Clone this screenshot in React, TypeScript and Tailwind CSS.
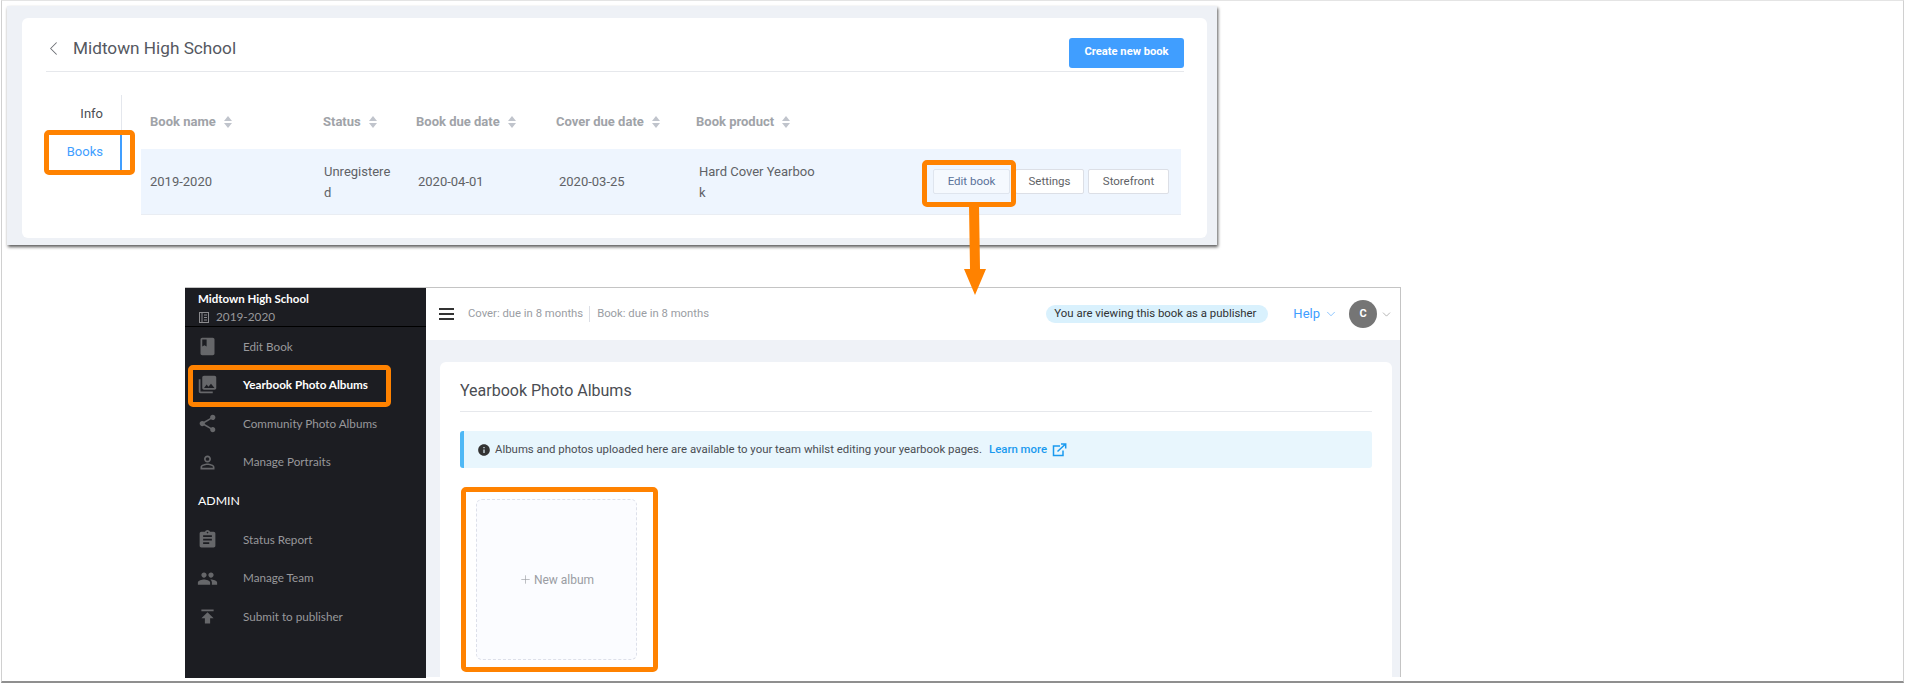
import React from 'react';
import { ChevronDown, ChevronLeft, Plus } from 'lucide-react';
import { MdAssignment, MdBook, MdInfo, MdOutlinePersonOutline, MdPeople, MdPhotoLibrary, MdPublish, MdShare } from 'react-icons/md';

const columns = [
  { label: 'Book name', width: 'w-[173px]' },
  { label: 'Status', width: 'w-[93px]' },
  { label: 'Book due date', width: 'w-[140px]' },
  { label: 'Cover due date', width: 'w-[140px]' },
  { label: 'Book product', width: 'w-[200px]' },
];

const menu = [
  { label: 'Edit Book', Icon: MdBook },
  { label: 'Yearbook Photo Albums', Icon: MdPhotoLibrary, active: true },
  { label: 'Community Photo Albums', Icon: MdShare },
  { label: 'Manage Portraits', Icon: MdOutlinePersonOutline },
];

const adminMenu = [
  { label: 'Status Report', Icon: MdAssignment },
  { label: 'Manage Team', Icon: MdPeople },
  { label: 'Submit to publisher', Icon: MdPublish },
];

const SortCaret = () => (
  <svg width="10" height="14" viewBox="0 0 10 14" className="ml-[7px] shrink-0">
    <path d="M5 1 L9 6 H1 Z M5 13 L1 8 H9 Z" fill="#c0c4cc" />
  </svg>
);

const NavItem = ({ label, Icon, active }: { label: string; Icon: React.ComponentType<{ size?: number; className?: string }>; active?: boolean }) => (
  <div className={`flex h-[38.6px] items-center ${active ? 'font-bold text-white' : 'text-[#98989b]'}`}>
    <div className="flex w-[58px] justify-start pl-[12px]">
      <Icon size={21} className="text-[#66676a]" />
    </div>
    <span className="text-[11.7px]">{label}</span>
  </div>
);

const Highlight = ({ className }: { className: string }) => (
  <div className={`pointer-events-none absolute rounded-[5px] border-[5px] border-[#ff8200] ${className}`} />
);

const BookList = () => (
  <div className="absolute left-[7px] top-[6px] h-[239px] w-[1210px] bg-[#eef1f6] pl-[15px] pt-[12px] shadow-[1px_2px_3px_rgba(0,0,0,0.65)]">
    <div className="h-[220px] w-[1185px] rounded-[6px] bg-white pl-[24px] pr-[23px]">
      <div className="flex h-[54px] items-center justify-between border-b border-[#e6e8ec] pt-[8px]">
        <div className="flex items-center text-[#55585f]">
          <ChevronLeft size={23} strokeWidth={1.1} className="ml-[-4px] text-[#6b6e74]" />
          <span className="ml-[8px] text-[17.2px]">Midtown High School</span>
        </div>
        <button className="mt-[8px] h-[30px] w-[115px] rounded-[3px] bg-[#409eff] text-[11.2px] font-bold text-white">Create new book</button>
      </div>
      <div className="flex pt-[23px]">
        <div className="h-[75px] w-[76px] border-r border-[#e4e7ed] text-right text-[13px]">
          <div className="flex h-[38px] items-center justify-end pr-[18px] text-[#4a4d53]">Info</div>
          <div className="mr-[-1px] flex h-[37px] items-center justify-end border-r-2 border-[#409eff] pr-[17px] text-[#409eff]">Books</div>
        </div>
        <div className="ml-[19px] w-[1040px]">
          <div className="flex h-[54px] items-center pl-[9px] text-[13px] font-bold text-[#a0a3a8]">
            {columns.map(c => (
              <div key={c.label} className={`flex items-center ${c.width}`}>
                {c.label}
                <SortCaret />
              </div>
            ))}
          </div>
          <div className="flex h-[66px] items-center border-b border-[#e9edf3] bg-[#eef5fe] pl-[9px] text-[13px] text-[#606266]">
            <div className="w-[174px]">2019-2020</div>
            <div className="w-[94px] pr-[24px] leading-[21px] break-all">Unregistered</div>
            <div className="w-[141px]">2020-04-01</div>
            <div className="w-[140px]">2020-03-25</div>
            <div className="w-[120px] leading-[21px] break-all">Hard Cover Yearbook</div>
            <div className="ml-[114px] flex items-center text-[11.5px]">
              <button className="h-[25px] w-[77px] rounded-[2px] border border-[#dfe5ee] bg-[#f5f9fe] text-[#5a7299]">Edit book</button>
              <button className="ml-[5px] h-[25px] w-[69px] rounded-[2px] border border-[#dcdfe6] bg-white text-[#606266]">Settings</button>
              <button className="ml-[4px] h-[25px] w-[81px] rounded-[2px] border border-[#dcdfe6] bg-white text-[#606266]">Storefront</button>
            </div>
          </div>
        </div>
      </div>
    </div>
  </div>
);

const Sidebar = () => (
  <aside className="h-[390px] w-[241px] shrink-0 bg-[#1c1d22] font-['Lato',sans-serif]">
    <div className="h-[39px] border-b border-black pl-[13px] pt-[2px]">
      <div className="text-[11.5px] font-bold leading-[18px] text-white">Midtown High School</div>
      <div className="flex items-center text-[11.8px] leading-[18px] text-[#98989b]">
        <svg width="10" height="11" viewBox="0 0 10 11" className="ml-[1px] mr-[7px]" fill="none" stroke="#8a8a8d">
          <rect x="0.5" y="0.5" width="9" height="10" />
          <path d="M3 1v9M5 3h3M5 5.5h3M5 8h3" />
        </svg>
        2019-2020
      </div>
    </div>
    <div>
      {menu.map(m => <NavItem key={m.label} {...m} />)}
    </div>
    <div className="flex h-[39px] items-center pl-[13px] pt-[1px] text-[12.3px] text-white">ADMIN</div>
    <div>
      {adminMenu.map(m => <NavItem key={m.label} {...m} />)}
    </div>
  </aside>
);

const Albums = () => (
  <div className="absolute left-[185px] top-[287px] flex h-[390px] w-[1216px] border-t border-r border-[#c4c4c4] bg-white">
    <Sidebar />
    <main className="flex-1 bg-[#eff2f7]">
      <header className="flex h-[52px] items-center bg-white text-[11.3px]">
        <div className="ml-[13px] flex w-[15px] flex-col gap-[3.5px]">
          <span className="h-[1.5px] bg-[#333]" />
          <span className="h-[1.5px] bg-[#333]" />
          <span className="h-[1.5px] bg-[#333]" />
        </div>
        <div className="ml-[14px] flex items-center text-[#9a9da3]">
          <span className="border-r border-[#dcdfe6] pr-[6px] leading-[16px]">Cover: due in 8 months</span>
          <span className="pl-[7px]">Book: due in 8 months</span>
        </div>
        <div className="ml-auto flex items-center">
          <div className="flex h-[18px] w-[222px] items-center rounded-full bg-[#d9f1fd] pl-[8px] text-[11.4px] whitespace-nowrap text-[#303133]">You are viewing this book as a publisher</div>
          <span className="ml-[25px] text-[13px] text-[#409eff]">Help</span>
          <ChevronDown size={14} strokeWidth={1} className="ml-[4px] text-[#409eff]" />
          <div className="ml-[11px] flex h-[28px] w-[28px] items-center justify-center rounded-full bg-[#757575] text-[11px] font-bold text-white">C</div>
          <ChevronDown size={13} strokeWidth={1} className="ml-[3px] mr-[7px] text-[#777]" />
        </div>
      </header>
      <section className="ml-[14px] mt-[22px] h-[316px] w-[952px] rounded-t-[6px] bg-white px-[20px]">
        <div className="flex h-[50px] items-center border-b border-[#e6e8ec] pt-[8px] text-[16px] text-[#4a4d53]">Yearbook Photo Albums</div>
        <div className="mt-[19px] flex h-[37px] items-center rounded-[3px] border-l-[4px] border-[#4fb8f5] bg-[#e8f6fd] pl-[13px] text-[11.4px] text-[#4a4d53]">
          <MdInfo size={14} className="text-[#333]" />
          <span className="ml-[4px]">Albums and photos uploaded here are available to your team whilst editing your yearbook pages.</span>
          <span className="ml-[7px] font-medium text-[#1a9aef]">Learn more</span>
          <svg width="15" height="14" viewBox="0 0 15 14" fill="none" stroke="#1a9aef" strokeWidth="1.5" className="ml-[5px]">
            <path d="M8 3H1.5v9.5H11V7.5" />
            <path d="M5.5 8.5 L13 1.5 M9 1 H13.7 V5.5" />
          </svg>
        </div>
        <div className="ml-[16px] mt-[31px] flex h-[161px] w-[161px] items-center justify-center rounded-[6px] border border-dashed border-[#dde0ea] bg-[#fbfcff] text-[12px] text-[#9a9da3]">
          <Plus size={13} strokeWidth={1.2} className="mr-[2px]" />
          New album
        </div>
      </section>
    </main>
  </div>
);

export default function App() {
  return (
    <div className="relative h-[685px] w-[1905px] overflow-hidden bg-white font-['Roboto',sans-serif]">
      <div className="absolute left-[1px] right-[1px] top-0 h-[683px] border-x border-t border-b-2 border-x-[#d0d0d0] border-t-[#e4e4e4] border-b-[#8f8f8f]" />
      <BookList />
      <Albums />

      <Highlight className="left-[44px] top-[130px] h-[45px] w-[91px]" />
      <Highlight className="left-[922px] top-[160px] h-[47px] w-[94px]" />
      <Highlight className="left-[188px] top-[365px] h-[42px] w-[203px]" />
      <Highlight className="left-[461px] top-[487px] h-[185px] w-[197px]" />

      <svg className="absolute left-[960px] top-[205px]" width="30" height="92" viewBox="0 0 30 92">
        <path d="M9 0 L19 0 L20 64 L26 64 L15 90 L4 64 L10 64 Z" fill="#ff8200" />
      </svg>
    </div>
  );
}
